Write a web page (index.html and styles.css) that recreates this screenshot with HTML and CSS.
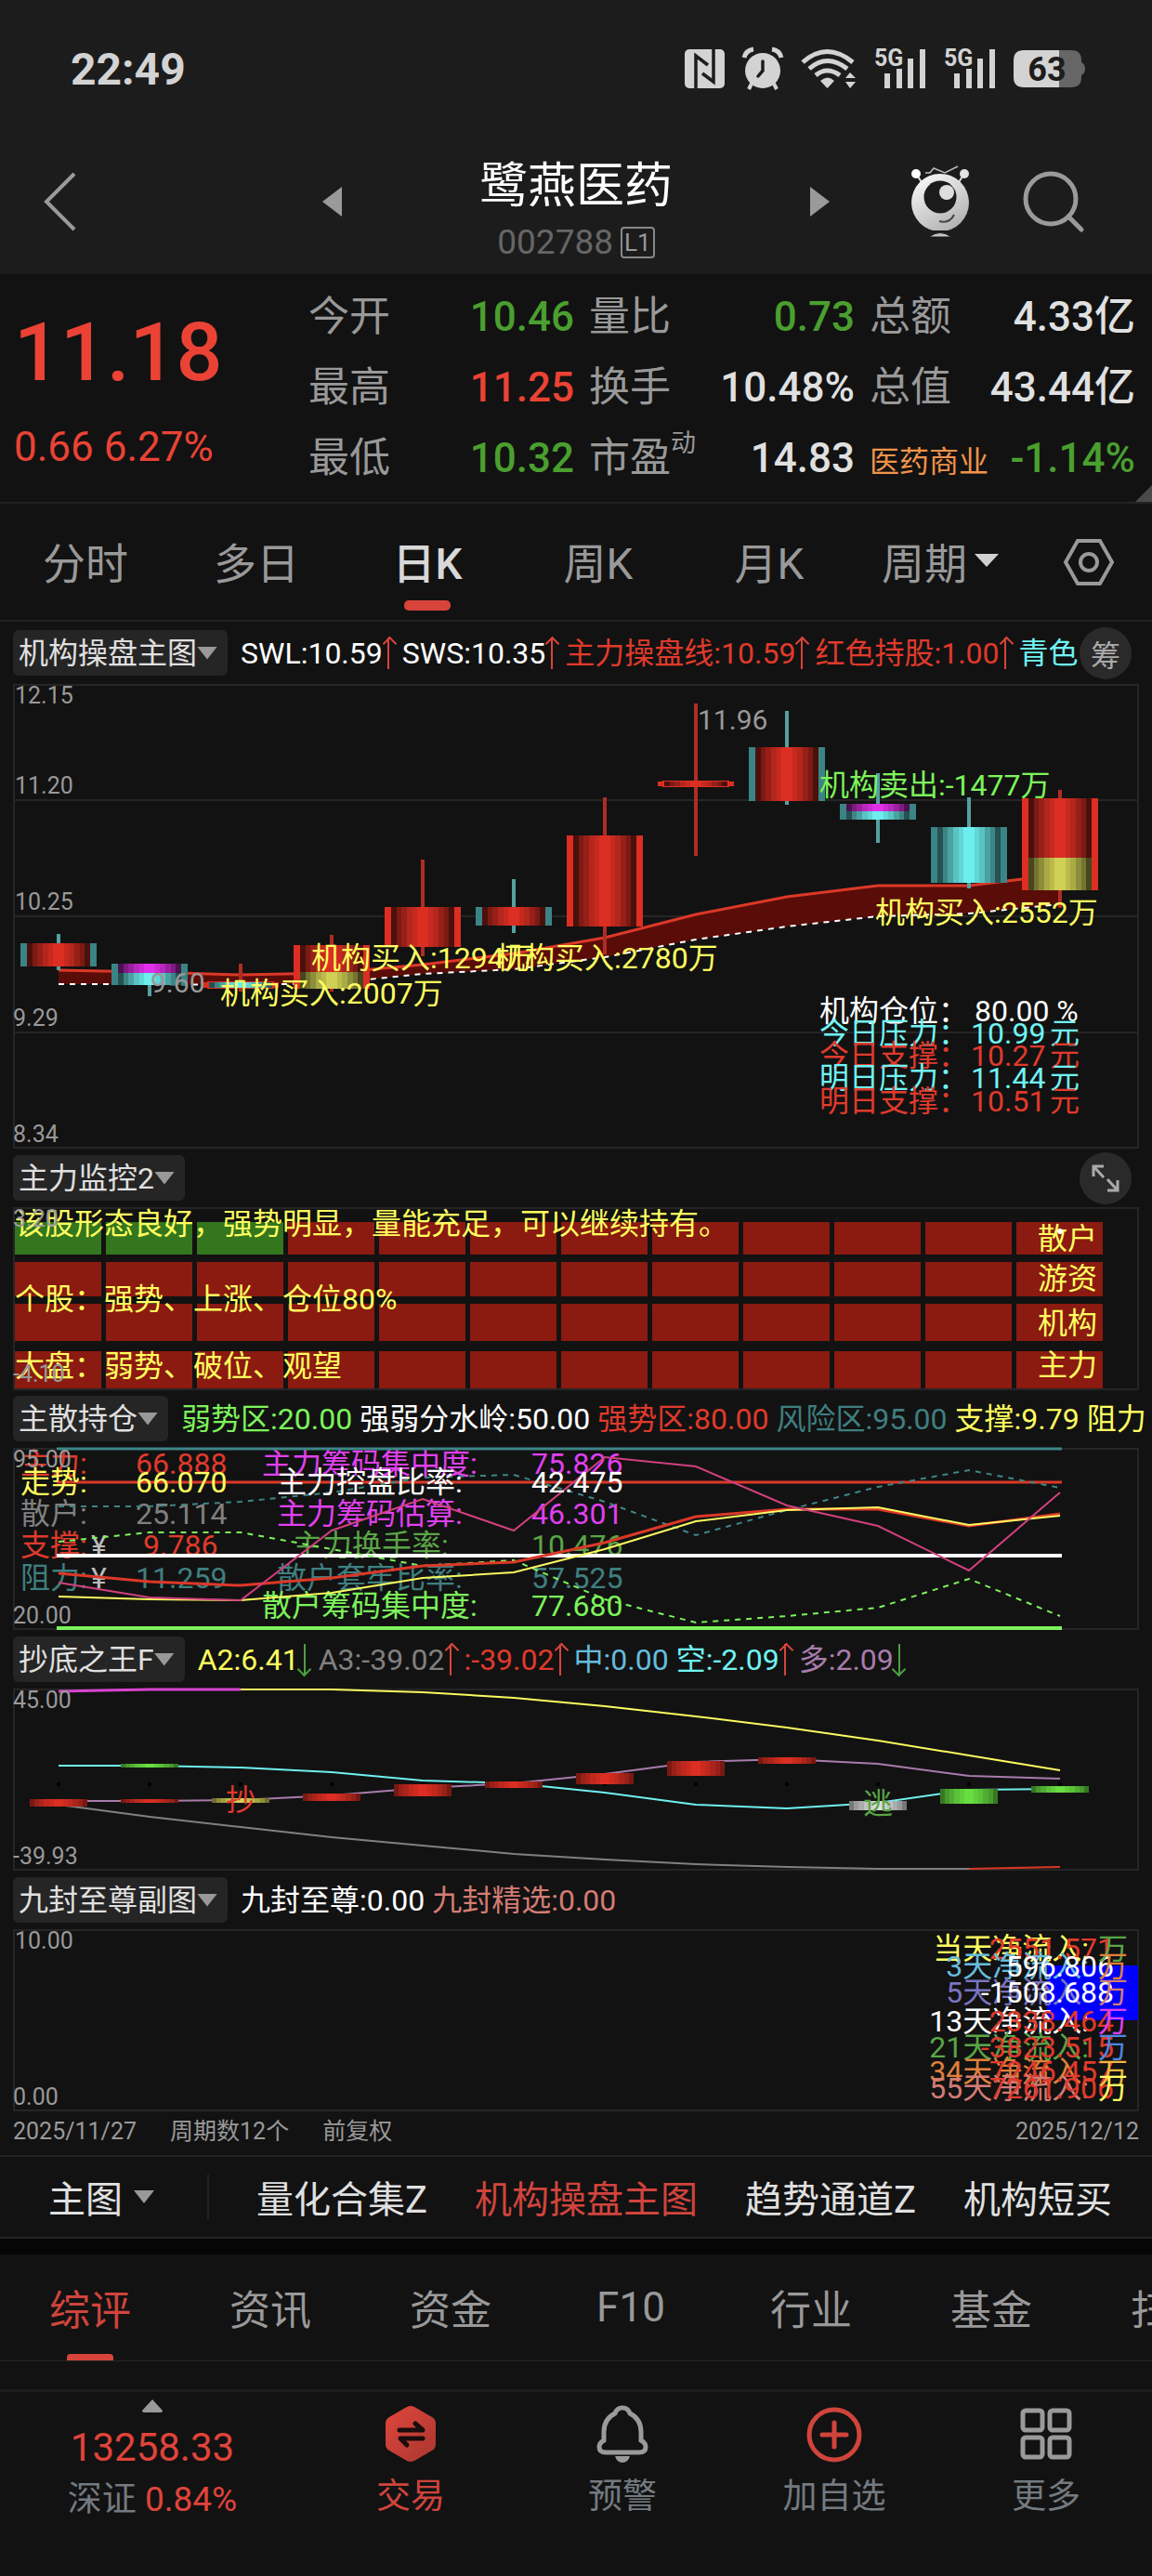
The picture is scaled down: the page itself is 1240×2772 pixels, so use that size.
FILE: index.html
```html
<!DOCTYPE html>
<html lang="zh-CN">
<head>
<meta charset="UTF-8" />
<meta name="viewport" content="width=device-width, initial-scale=1" />
<title>鹭燕医药 002788</title>
<link rel="stylesheet" href="styles.css">
</head>
<body>
<header class="top">
  <div class="status">
    <span class="time">22:49</span>
    <div class="status-icons">
      <svg width="43" height="42" viewBox="0 0 43 42"><rect width="43" height="42" rx="5" fill="#d3d3d3"/><path d="M12 42V7l13 10M31 0v35L19 26" fill="none" stroke="#1c1c1c" stroke-width="3.5"/></svg>
      <svg width="44" height="44" viewBox="0 0 44 44"><circle cx="22" cy="24" r="19" fill="#d3d3d3"/><path d="M2 10Q4 2 12 1M42 10Q40 2 32 1" stroke="#d3d3d3" stroke-width="5" fill="none"/><path d="M10 38l-3 6M34 38l3 6" stroke="#d3d3d3" stroke-width="4"/><path d="M22 14v10l-5 6" fill="none" stroke="#1c1c1c" stroke-width="3.5" stroke-linecap="round"/></svg>
      <svg width="60" height="42" viewBox="0 0 60 42"><g fill="none" stroke="#d3d3d3" stroke-width="5"><path d="M2 14Q28-9 56 14"/><path d="M9 21Q28 4 50 21"/><path d="M16 28Q28 18 42 28"/></g><path d="M21 34q8-7 15 0l-7.5 8zM48 31l5-6 6 6zM48 35l5 7 6-7z" fill="#d3d3d3"/></svg>
      <svg width="56" height="44" viewBox="0 0 56 44"><text x="0" y="19" class="net">5G</text><path d="M11 27h6v16h-6zM24 22h6v21h-6zM36 11h6v32h-6zM49 1h6v42h-6z" fill="#d3d3d3"/></svg>
      <svg width="56" height="44" viewBox="0 0 56 44"><text x="0" y="19" class="net">5G</text><path d="M11 27h6v16h-6zM24 22h6v21h-6zM36 11h6v32h-6zM49 1h6v42h-6z" fill="#d3d3d3"/></svg>
      <svg width="77" height="40" viewBox="0 0 77 40"><path d="M49 0h13q11 0 11 11v2q4 2 4 7t-4 7v2q0 11-11 11H49z" fill="#666"/><path d="M11 0h38v40H11Q0 40 0 29V11Q0 0 11 0z" fill="#d3d3d3"/><text x="36" y="33" class="batt">63</text></svg>
    </div>
  </div>
  <nav class="titlebar">
    <button class="icon-btn back" aria-label="返回"><svg width="34" height="64" viewBox="0 0 34 64"><path d="M32 2L2 32l30 30" fill="none" stroke="#9a9a9a" stroke-width="4"/></svg></button>
    <div class="stock">
      <button class="icon-btn" aria-label="上一只"><svg width="21" height="32" viewBox="0 0 21 32"><path d="M21 0v32L0 16z" fill="#9a9a9a"/></svg></button>
      <div class="stock-name">
        <h1>鹭燕医药</h1>
        <p class="code">002788 <span class="level">L1</span></p>
      </div>
      <button class="icon-btn" aria-label="下一只"><svg width="21" height="32" viewBox="0 0 21 32"><path d="M0 0v32l21-16z" fill="#9a9a9a"/></svg></button>
    </div>
    <div class="actions">
      <button class="icon-btn" aria-label="智能助手">
        <svg width="62" height="78" viewBox="0 0 62 78">
          <defs><linearGradient id="bot" x1="0" y1="0" x2="0.6" y2="1"><stop offset="0" stop-color="#fff"/><stop offset="1" stop-color="#b4b4b4"/></linearGradient></defs>
          <path d="M5 9l8 12M57 9l-8 12" stroke="#e0e0e0" stroke-width="2"/><circle cx="5" cy="9" r="5" fill="#fff"/><circle cx="57" cy="9" r="5" fill="#e4e4e4"/>
          <path d="M15 8h5l4-5 12 5 14-7" fill="none" stroke="#bbb" stroke-width="1.5"/>
          <circle cx="31" cy="40" r="31" fill="url(#bot)"/><circle cx="31" cy="34" r="17.5" fill="#1c1c1c"/><circle cx="38" cy="29" r="8" fill="#dedede"/>
          <path d="M30 60q11 3 16-7" fill="none" stroke="#444" stroke-width="2"/><path d="M15 70h32v1H15z" fill="#1c1c1c"/><path d="M19 77q12-9 24 0z" fill="#c4c4c4" stroke="#1c1c1c"/>
        </svg>
      </button>
      <button class="icon-btn" aria-label="搜索"><svg width="66" height="66" viewBox="0 0 66 66"><circle cx="30" cy="30" r="27" fill="none" stroke="#9a9a9a" stroke-width="5"/><path d="M49 49l14 14" stroke="#9a9a9a" stroke-width="5" stroke-linecap="round"/></svg></button>
    </div>
  </nav>
</header>

<section class="quote">
  <div class="price">
    <strong>11.18</strong>
    <span>0.66 6.27%</span>
  </div>
  <dl class="facts">
    <div><dt>今开</dt><dd class="down">10.46</dd></div>
    <div><dt>量比</dt><dd class="down">0.73</dd></div>
    <div><dt>总额</dt><dd>4.33亿</dd></div>
    <div><dt>最高</dt><dd class="up">11.25</dd></div>
    <div><dt>换手</dt><dd>10.48%</dd></div>
    <div><dt>总值</dt><dd>43.44亿</dd></div>
    <div><dt>最低</dt><dd class="down">10.32</dd></div>
    <div><dt>市盈<sup>动</sup></dt><dd>14.83</dd></div>
    <div><dt class="sector">医药商业</dt><dd class="down">-1.14%</dd></div>
  </dl>
</section>

<nav class="periods">
  <a href="#">分时</a>
  <a href="#">多日</a>
  <a href="#" class="active">日K</a>
  <a href="#">周K</a>
  <a href="#">月K</a>
  <button type="button">周期<svg width="26" height="14" viewBox="0 0 26 14"><path d="M0 0h26L13 14z" fill="#d0d0d0"/></svg></button>
  <button type="button" class="gear" aria-label="设置"><svg width="54" height="50" viewBox="0 0 54 50"><path d="M15 2h24l13 23-13 23H15L2 25z" fill="none" stroke="#999" stroke-width="4"/><circle cx="27" cy="25" r="9" fill="none" stroke="#999" stroke-width="4"/></svg></button>
</nav>

<main class="charts">
  <section class="panel">
    <div class="panel-head first">
      <button type="button" class="pill">机构操盘主图<i class="caret"></i></button>
      <div class="legend">
        <span class="white">SWL:10.59<i class="arrow up"></i></span>
        <span class="white">SWS:10.35<i class="arrow up"></i></span>
        <span class="red">主力操盘线:10.59<i class="arrow up"></i></span>
        <span class="red">红色持股:1.00<i class="arrow up"></i></span>
        <span class="cyan">青色</span>
      </div>
      <button type="button" class="round">筹</button>
    </div>
    <svg class="plot" viewBox="0 0 1212 500">
      <defs>
        <linearGradient id="shade"></linearGradient>
      </defs>
      <path class="frame" d="M1 1h1210v498H1zM1 125h1210M1 250h1210M1 375h1210"/>
      <path fill="#5a0d08" d="M49 308L147 310 245 313 343 311 441 302 539 290 637 273 735 248 833 229 931 217 1029 217 1127 205V237L1029 247 931 250 833 261 735 275 637 294 539 307 441 312 343 322 245 324 147 323 49 323z"/>
      <polyline class="line s-red w3" points="49,308 147,310 245,313 343,311 441,302 539,290 637,273 735,248 833,229 931,217 1029,217 1127,205"/>
      <polyline class="line s-white dash" points="49,323 147,323 245,324 343,322 441,312 539,307 637,294 735,275 833,261 931,250 1029,247 1127,237"/>
      <g id="candles"></g>
      <g class="axis">
        <text x="2" y="21">12.15</text><text x="2" y="118">11.20</text><text x="2" y="243">10.25</text><text x="0" y="368">9.29</text><text x="0" y="493">8.34</text>
      </g>
      <g class="mark gray"><text x="737" y="49">11.96</text><text x="148" y="332">9.60</text></g>
      <g class="yellow">
        <text x="321" y="306">机构买入:1294万</text>
        <text x="519" y="306">机构买入:2780万</text>
        <text x="223" y="344">机构买入:2007万</text>
        <text x="928" y="257">机构买入:2552万</text>
      </g>
      <text class="lime" x="868" y="120">机构卖出:-1477万</text>
      <text class="white" x="868" y="363">机构仓位：<tspan x="1035">80.00 %</tspan></text>
      <text class="cyan" x="868" y="387">今日压力：<tspan x="1031">10.99</tspan><tspan x="1116">元</tspan></text>
      <text class="red" x="868" y="411">今日支撑：<tspan x="1031">10.27</tspan><tspan x="1116">元</tspan></text>
      <text class="cyan" x="868" y="435">明日压力：<tspan x="1031">11.44</tspan><tspan x="1116">元</tspan></text>
      <text class="red" x="868" y="460">明日支撑：<tspan x="1031">10.51</tspan><tspan x="1116">元</tspan></text>
    </svg>
  </section>

  <section class="panel">
    <div class="panel-head">
      <button type="button" class="pill">主力监控2<i class="caret"></i></button>
      <button type="button" class="round" aria-label="全屏"><svg width="30" height="30" viewBox="0 0 30 30" fill="none" stroke="#aaa" stroke-width="3"><path d="M2 13V2h11M2 2l11 12M28 17v11H17M28 28L17 16"/></svg></button>
    </div>
    <svg class="plot" viewBox="0 0 1212 196">
      <rect class="frame" x="1" y="1" width="1210" height="195"/>
      <g id="cells"></g>
      <g class="yellow">
        <text x="2" y="29">该股形态良好，强势明显，量能充足，可以继续持有。</text>
        <text x="2" y="110">个股：强势、上涨、仓位80%</text>
        <text x="2" y="182">大盘：弱势、破位、观望</text>
        <text x="1103" y="45">散户</text><text x="1103" y="88">游资</text><text x="1103" y="136">机构</text><text x="1103" y="181">主力</text>
      </g>
      <circle cx="1127" cy="26" r="3" fill="#fff"/>
      <g class="axis"><text x="0" y="21">3.20</text><text x="0" y="188">-4.10</text></g>
    </svg>
  </section>

  <section class="panel">
    <div class="panel-head">
      <button type="button" class="pill">主散持仓<i class="caret"></i></button>
      <div class="legend">
        <span class="lime">弱势区:20.00</span>
        <span class="white">强弱分水岭:50.00</span>
        <span class="red">强势区:80.00</span>
        <span class="teal">风险区:95.00</span>
        <span class="yellow">支撑:9.79</span>
        <span class="yellow">阻力</span>
      </div>
    </div>
    <svg class="plot" viewBox="0 0 1212 196">
      <rect class="frame" x="1" y="1" width="1210" height="194"/>
      <g class="teal"><text x="8" y="151">阻力:<tspan x="132">11.259</tspan></text><text x="284" y="151">散户套牢比率:<tspan x="558">57.525</tspan></text></g>
      <g class="red"><text x="8" y="28">主力:<tspan x="132">66.888</tspan></text><text x="8" y="116">支撑:<tspan x="140">9.786</tspan></text></g>
      <g class="silver"><text x="84" y="116">¥</text><text x="84" y="151">¥</text></g>
      <text class="dim" x="8" y="82">散户:<tspan x="132">25.114</tspan></text>
      <g class="magenta"><text x="268" y="28">主力筹码集中度:<tspan x="558">75.826</tspan></text><text x="284" y="82">主力筹码估算:<tspan x="558">46.301</tspan></text></g>
      <text class="leaf" x="301" y="116">主力换手率:<tspan x="558">10.476</tspan></text>
      <text class="lime" x="268" y="181">散户筹码集中度:<tspan x="558">77.680</tspan></text>
      <path class="line s-teal w3" d="M47 1H1129"/>
      <path class="line s-red w3" d="M47 37H1129"/>
      <path class="line s-white w4" d="M47 116H1129"/>
      <path class="line s-lime w4" d="M47 194H1129"/>
      <polyline class="line s-teal dash" points="49,63 147,63 245,58 343,48 441,32 539,29 637,58 735,94 833,67 931,42 1029,24 1127,43"/>
      <polyline class="line s-lime dash" points="49,101 147,91 245,91 343,109 441,127 539,121 637,163 735,188 833,181 931,172 1029,141 1127,181"/>
      <polyline class="line s-red w3" points="49,135 147,144 245,148 343,140 441,127 539,123 637,102 735,74 833,66 931,66 1029,84 1127,71"/>
      <polyline class="line s-yellow" points="49,160 147,163 245,164 343,156 441,140 539,134 637,109 735,79 833,67 931,64 1029,83 1127,73"/>
      <polyline class="line s-pink" points="49,145 147,161 245,164 343,89 441,55 539,89 637,10 735,20 833,62 931,84 1029,132 1127,48"/>
      <text class="yellow" x="8" y="48">走势:<tspan x="132">66.070</tspan></text>
      <text class="white" x="284" y="48">主力控盘比率:<tspan x="558">42.475</tspan></text>
      <g class="axis"><text x="0" y="21">95.00</text><text x="0" y="189">20.00</text></g>
    </svg>
  </section>

  <section class="panel">
    <div class="panel-head">
      <button type="button" class="pill">抄底之王F<i class="caret"></i></button>
      <div class="legend">
        <span class="yellow">A2:6.41<i class="arrow down"></i></span>
        <span class="dim">A3:-39.02<i class="arrow up"></i></span>
        <span class="red">:-39.02<i class="arrow up"></i></span>
        <span class="sky">中:0.00</span>
        <span class="cyan">空:-2.09<i class="arrow up"></i></span>
        <span class="mauve">多:2.09<i class="arrow down"></i></span>
      </div>
    </div>
    <svg class="plot" viewBox="0 0 1212 196">
      <rect class="frame" x="1" y="1" width="1210" height="194"/>
      <polyline class="line s-magenta w3" points="49,3 147,1 245,1"/>
      <polyline class="line s-yellow" points="245,1 343,1 441,4 539,10 637,19 735,30 833,42 931,56 1029,72 1127,88"/>
      <polyline class="line s-cyan" points="49,83 147,83 245,85 343,90 441,99 539,102 637,112 735,125 833,129 931,123 1029,109 1127,108"/>
      <polyline class="line s-mauve" points="49,121 147,121 245,120 343,115 441,107 539,102 637,92 735,79 833,76 931,81 1029,94 1127,97"/>
      <polyline class="line s-gray" points="49,125 147,138 245,149 343,160 441,169 539,178 637,184 735,189 833,192 931,194 1029,194"/>
      <polyline class="line s-red" points="1029,194 1127,192"/>
      <g id="bars"></g>
      <text class="red" x="229" y="131">抄</text>
      <text class="leaf" x="915" y="135">逃</text>
      <g class="axis"><text x="0" y="21">45.00</text><text x="0" y="189">-39.93</text></g>
    </svg>
  </section>

  <section class="panel">
    <div class="panel-head">
      <button type="button" class="pill">九封至尊副图<i class="caret"></i></button>
      <div class="legend">
        <span class="white">九封至尊:0.00</span>
        <span class="salmon">九封精选:0.00</span>
      </div>
    </div>
    <svg class="plot" viewBox="0 0 1212 196">
      <rect class="frame" x="1" y="1" width="1210" height="194"/>
      <rect x="1113" y="39" width="98" height="59" fill="#00f"/>
      <g class="end">
        <text class="yellow" x="1158" y="32">当天净流入:</text><text class="red" x="1185" y="32">2551.571</text>
        <text class="sky" x="1158" y="51">3天净流入:</text><text class="white" x="1185" y="51">596.806</text>
        <text class="violet" x="1158" y="79">5天净流入:</text><text class="white" x="1185" y="79">-1508.688</text>
        <text class="white" x="1158" y="110">13天净流入:</text><text class="red" x="1185" y="110">2338.464</text>
        <text class="leaf" x="1158" y="138">21天净流入:</text><text class="red" x="1185" y="138">-3823.515</text>
        <text class="orange" x="1158" y="164">34天净流入:</text><text class="red" x="1185" y="164">7246.457</text>
        <text class="salmon" x="1158" y="182">55天净流入:</text><text class="red" x="1185" y="182">7261.906</text>
      </g>
      <text class="leaf" x="1168" y="32">万</text>
      <text class="orange" x="1168" y="51">万</text>
      <text class="salmon" x="1168" y="79">万</text>
      <text class="magenta" x="1168" y="110">万</text>
      <text class="blue" x="1168" y="138">万</text>
      <text class="gold" x="1168" y="166">万</text>
      <text class="yellow" x="1168" y="182">万</text>
      <g class="axis"><text x="2" y="21">10.00</text><text x="0" y="189">0.00</text></g>
    </svg>
  </section>

  <div class="dates">
    <span>2025/11/27</span><span>周期数12个</span><span>前复权</span><span class="last">2025/12/12</span>
  </div>
</main>

<nav class="indicators">
  <button type="button" class="main-pick">主图<i class="caret"></i></button>
  <a href="#">量化合集Z</a>
  <a href="#" class="active">机构操盘主图</a>
  <a href="#">趋势通道Z</a>
  <a href="#">机构短买</a>
</nav>

<nav class="tabs">
  <a href="#" class="active">综评</a>
  <a href="#">资讯</a>
  <a href="#">资金</a>
  <a href="#">F10</a>
  <a href="#">行业</a>
  <a href="#">基金</a>
  <a href="#">扫雷</a>
</nav>

<footer class="bottom">
  <a href="#" class="index">
    <svg width="22" height="14" viewBox="0 0 22 14"><path d="M11 0l11 12q0 2-2 2H2q-2 0-2-2z" fill="#999"/></svg>
    <strong>13258.33</strong>
    <span>深证 <em>0.84%</em></span>
  </a>
  <a href="#" class="active">
    <svg width="62" height="62" viewBox="0 0 62 62">
      <defs><linearGradient id="hex" x1="0" y1="0" x2="1" y2="1"><stop offset="0" stop-color="#e0473b"/><stop offset="1" stop-color="#a93630"/></linearGradient></defs>
      <path d="M27 2q4-2 8 0l19 11q4 2 4 7v22q0 5-4 7L35 60q-4 2-8 0L8 49q-4-2-4-7V20q0-5 4-7z" fill="url(#hex)"/>
      <path d="M19 27h25l-8-7M44 36H20l7 7" fill="none" stroke="#1b0d0c" stroke-width="5" stroke-linecap="round" stroke-linejoin="round"/>
    </svg>
    <span>交易</span>
  </a>
  <a href="#">
    <svg width="62" height="62" viewBox="0 0 62 62"><path d="M31 3q-6 0-8 6-12 6-12 20v9q-5 3-5 7 0 6 7 6h36q7 0 7-6 0-4-5-7v-9q0-14-12-20-2-6-8-6z" fill="none" stroke="#9a9a9a" stroke-width="5"/><path d="M23 55h16q-2 7-8 7t-8-7z" fill="#9a9a9a"/></svg>
    <span>预警</span>
  </a>
  <a href="#">
    <svg width="62" height="62" viewBox="0 0 62 62" fill="none" stroke="#d0443c" stroke-width="5" stroke-linecap="round"><circle cx="31" cy="32" r="27"/><path d="M31 19v26M18 32h26"/></svg>
    <span>加自选</span>
  </a>
  <a href="#">
    <svg width="62" height="62" viewBox="0 0 62 62" fill="none" stroke="#9a9a9a" stroke-width="5"><rect x="6" y="6" width="21" height="21" rx="3"/><rect x="35" y="6" width="21" height="21" rx="3"/><rect x="6" y="35" width="21" height="21" rx="3"/><rect x="35" y="35" width="21" height="21" rx="3"/></svg>
    <span>更多</span>
  </a>
</footer>
<script src="charts.js"></script>
</body>
</html>
```
FILE: styles.css
```css
* {
  box-sizing: border-box;
}
body {
  margin: 0;
  min-height: 100vh;
  background-color: #121212;
  color: #e0e0e0;
  font-family: Roboto, "Noto Sans CJK SC", sans-serif;
  font-size: 32px;
  overflow-x: hidden;
}
a {
  color: inherit;
  text-decoration: none;
}
button {
  border: none;
  padding: 0;
  background: none;
  color: inherit;
  font: inherit;
  cursor: pointer;
}
svg {
  display: block;
  flex: none;
  overflow: visible;
}

/* header */
.top {
  background-color: #1c1c1c;
  height: 295px;
}
.status {
  display: flex;
  justify-content: space-between;
  align-items: center;
  height: 148px;
  padding: 0 72px 0 76px;
}
.time {
  font-size: 48px;
  font-weight: 700;
  color: #d3d3d3;
}
.status-icons {
  display: flex;
  align-items: center;
  gap: 19px;
}
.net {
  font-size: 25px;
  font-weight: 700;
  fill: #d3d3d3;
}
.batt {
  font-size: 36px;
  font-weight: 700;
  fill: #1c1c1c;
  text-anchor: middle;
}
.titlebar {
  display: grid;
  grid-template-columns: 1fr 546px 1fr;
  align-items: center;
  height: 138px;
  padding: 0 73px;
}
.icon-btn {
  display: block;
}
.back {
  margin-left: -25px;
}
.stock {
  display: flex;
  justify-content: space-between;
  align-items: center;
}
.stock-name {
  margin-top: 20px;
  text-align: center;
}
h1 {
  margin: 0;
  font-size: 52px;
  line-height: 64px;
  font-weight: 400;
  color: #fff;
}
.code {
  display: flex;
  justify-content: center;
  gap: 8px;
  margin: 4px 0 0;
  font-size: 37px;
  line-height: 48px;
  color: #666;
}
.level {
  align-self: center;
  border: 2px solid #888;
  border-radius: 4px;
  padding: 0 2px;
  font-size: 26px;
  line-height: 30px;
  color: #999;
}
.actions {
  display: flex;
  justify-content: flex-end;
  align-items: center;
  gap: 58px;
}

/* quote */
.quote {
  position: relative;
  display: grid;
  grid-template-columns: 332px 1fr;
  height: 247px;
  padding-right: 18px;
  border-bottom: 2px solid #232323;
}
.quote::after {
  content: "";
  position: absolute;
  right: 0;
  bottom: 0;
  border-left: 18px solid transparent;
  border-bottom: 18px solid #4a4a4a;
}
.price {
  display: flex;
  flex-direction: column;
  padding: 34px 0 0 15px;
  color: #ea4335;
}
.price strong {
  font-size: 88px;
  line-height: 100px;
  font-weight: 500;
}
.price span {
  margin-top: 28px;
  font-size: 44px;
  line-height: 48px;
}
.facts {
  display: grid;
  grid-template-columns: 286px 286px 1fr;
  grid-auto-rows: 76px;
  column-gap: 16px;
  margin: 0;
  padding-top: 8px;
  font-size: 44px;
  line-height: 76px;
}
.facts div {
  display: flex;
  justify-content: space-between;
  align-items: baseline;
  white-space: nowrap;
}
dt {
  color: #999;
}
dt sup {
  font-size: 27px;
  line-height: 0;
  vertical-align: 22px;
}
dt.sector {
  font-size: 32px;
  color: #f0944a;
}
dd {
  margin: 0;
  font-weight: 500;
}
dd.up {
  color: #ea4335;
}
dd.down {
  color: #4a9f2f;
}

/* period tabs */
.periods {
  display: grid;
  grid-template-columns: repeat(6, 1fr) 136px;
  height: 127px;
  border-bottom: 2px solid #232323;
  font-size: 46px;
  color: #999;
}
.periods a,
.periods button {
  position: relative;
  display: flex;
  justify-content: center;
  align-items: center;
  gap: 8px;
  padding-bottom: 4px;
}
.periods .gear {
  padding-bottom: 0;
}
.periods .active {
  color: #d8d8d8;
  font-weight: 500;
}
.periods .active::after {
  content: "";
  position: absolute;
  bottom: 10px;
  width: 50px;
  height: 11px;
  border-radius: 5px;
  background-color: #d8443a;
}

/* chart panels */
.charts {
  padding: 0 14px;
}
.panel-head {
  position: relative;
  display: flex;
  align-items: center;
  height: 63px;
}
.panel-head.first {
  height: 67px;
}
.pill {
  display: flex;
  flex: none;
  align-items: center;
  height: 49px;
  padding: 0 11px 0 6px;
  border-radius: 6px;
  background-color: #252525;
  line-height: 48px;
}
.caret {
  width: 22px;
  height: 14px;
  background-color: #999;
  clip-path: polygon(0 0, 100% 0, 50% 100%);
}
.legend {
  display: flex;
  align-items: baseline;
  gap: 8px;
  margin: 0 -14px 0 14px;
  line-height: 48px;
  overflow: hidden;
  white-space: nowrap;
}
.arrow {
  position: relative;
  display: inline-block;
  width: 13px;
  height: 34px;
  vertical-align: -6px;
  color: #d8443a;
  background: linear-gradient(currentColor, currentColor) center / 2px 100% no-repeat;
}
.arrow::before {
  content: "";
  position: absolute;
  left: 2px;
  top: 1px;
  width: 9px;
  height: 9px;
  border: solid currentColor;
  border-width: 2px 0 0 2px;
  transform: rotate(45deg);
}
.arrow.down {
  color: #4aa040;
  transform: rotate(180deg);
}
.round {
  position: absolute;
  right: 8px;
  display: flex;
  justify-content: center;
  align-items: center;
  width: 56px;
  height: 56px;
  border-radius: 50%;
  background-color: #2a2a2a;
  color: #aaa;
}
.plot {
  width: 100%;
  height: auto;
}
.frame {
  fill: none;
  stroke: #252525;
  stroke-width: 2;
}
.line {
  fill: none;
  stroke-width: 2;
}
.w3 { stroke-width: 3; }
.w4 { stroke-width: 4; }
.dash { stroke-dasharray: 6 6; }
.axis {
  fill: #999;
  font-size: 25px;
}
.mark {
  font-size: 30px;
}
.end {
  text-anchor: end;
}

.white { color: #fff; fill: #fff; }
.red { color: #e03a2c; fill: #e03a2c; }
.cyan { color: #70f4f4; fill: #70f4f4; }
.lime { color: #7df35c; fill: #7df35c; }
.teal { color: #3f7f80; fill: #3f7f80; }
.yellow { color: #ffff60; fill: #ffff60; }
.magenta { color: #e040f0; fill: #e040f0; }
.sky { color: #66bcdc; fill: #66bcdc; }
.mauve { color: #a87cac; fill: #a87cac; }
.salmon { color: #d47c74; fill: #d47c74; }
.orange { color: #e0803a; fill: #e0803a; }
.violet { color: #7a74c0; fill: #7a74c0; }
.blue { fill: #4f86e0; }
.gold { fill: #f0b840; }
.leaf { fill: #5aa546; }
.silver { fill: #bbb; }
.gray { fill: #999; }
.dim { color: #808080; fill: #808080; }

.s-red { stroke: #dc3828; }
.s-white { stroke: #fff; }
.s-teal { stroke: #3f8586; }
.s-lime { stroke: #7df35c; }
.s-yellow { stroke: #fafa60; }
.s-pink { stroke: #d0407e; }
.s-magenta { stroke: #d844d0; }
.s-cyan { stroke: #70f0f0; }
.s-mauve { stroke: #a87cac; }
.s-gray { stroke: #808080; }

.dates {
  display: flex;
  gap: 36px;
  align-items: baseline;
  height: 47px;
  font-size: 25px;
  line-height: 44px;
  color: #999;
}
.dates .last {
  margin-left: auto;
}

/* indicator strip */
.indicators {
  display: flex;
  align-items: center;
  gap: 51px;
  height: 90px;
  border: solid #232323;
  border-width: 2px 0;
  font-size: 40px;
  white-space: nowrap;
  overflow: hidden;
}
.main-pick {
  display: flex;
  flex: none;
  align-items: center;
  gap: 12px;
  width: 225px;
  height: 48px;
  padding-left: 52px;
  border-right: 2px solid #222;
}
.indicators .active {
  color: #d0443c;
}

/* info tabs */
.tabs {
  display: flex;
  height: 132px;
  border-top: 17px solid #060606;
  border-bottom: 1px solid #262626;
  font-size: 44px;
  color: #999;
  overflow: hidden;
}
.tabs a {
  position: relative;
  flex: 0 0 194px;
  display: flex;
  justify-content: center;
  align-items: center;
}
.tabs .active {
  color: #d0443c;
}
.tabs .active::after {
  content: "";
  position: absolute;
  bottom: 0;
  width: 50px;
  height: 7px;
  border-radius: 4px 4px 0 0;
  background-color: #d8443a;
}

/* bottom bar */
.bottom {
  display: grid;
  grid-template-columns: 328px repeat(4, 1fr);
  margin-top: 30px;
  padding-bottom: 52px;
  border-top: 3px solid #1e1e1e;
  font-size: 37px;
  color: #737a80;
}
.bottom a {
  display: flex;
  flex-direction: column;
  align-items: center;
  padding-top: 14px;
}
.bottom a span {
  margin-top: 13px;
  line-height: 48px;
}
.bottom .active {
  color: #d0443c;
}
.bottom .index {
  padding-top: 8px;
}
.index strong {
  margin-top: 14px;
  font-size: 42px;
  line-height: 48px;
  font-weight: 400;
  color: #e0443a;
}
.bottom .index span {
  margin-top: 8px;
}
.index em {
  font-style: normal;
  color: #e0443a;
}
```
FILE: charts.js
```js
const NS = 'http://www.w3.org/2000/svg';
const STEP = 98;
const FIRST = 49;

const COLORS = {
  red: '#dc2e22',
  teal: '#3b8485',
  cyan: '#6ceeee',
  magenta: '#e030e8',
  olive: '#d0d055',
  green: '#66de40',
  gray: '#dddddd'
};

function rect(parent, x, y, width, height, fill, opacity) {
  const el = document.createElementNS(NS, 'rect');
  el.setAttribute('x', x);
  el.setAttribute('y', y);
  el.setAttribute('width', width);
  el.setAttribute('height', height);
  el.setAttribute('fill', fill);
  if (opacity) el.setAttribute('opacity', opacity);
  parent.appendChild(el);
}

// stepped shading, dark on both sides and clear in the middle
const shade = document.getElementById('shade');
const steps = [0.66, 0.44, 0.32, 0.18, 0.1, 0, 0, 0.1, 0.18, 0.32, 0.44, 0.66];
steps.forEach((alpha, i) => {
  [i, i + 1].forEach((edge) => {
    const stop = document.createElementNS(NS, 'stop');
    stop.setAttribute('offset', edge / steps.length);
    stop.setAttribute('stop-color', '#000');
    stop.setAttribute('stop-opacity', alpha);
    shade.appendChild(stop);
  });
});

// edge colour, high, low, then [top, bottom, fill] for each part of the body
const candles = [
  ['teal', 269, 308, [[279, 304, 'red']]],
  ['teal', 301, 336, [[301, 311, 'magenta'], [311, 324, 'cyan']]],
  ['red', 301, 331, [[321, 327, 'cyan']]],
  ['red', 270, 331, [[281, 310, 'red'], [310, 328, 'olive']]],
  ['red', 189, 293, [[240, 283, 'red']]],
  ['teal', 210, 268, [[240, 260, 'red']]],
  ['red', 122, 291, [[163, 261, 'red']]],
  ['red', 21, 185, [[105, 110, 'red']]],
  ['teal', 29, 130, [[68, 126, 'red']]],
  ['teal', 96, 171, [[129, 137, 'magenta'], [137, 146, 'cyan']]],
  ['teal', 122, 220, [[154, 214, 'cyan']]],
  ['red', 114, 241, [[123, 187, 'red'], [187, 222, 'olive']]]
];

const candleGroup = document.getElementById('candles');
candles.forEach(([edge, high, low, parts], i) => {
  const x = FIRST + i * STEP;
  const top = parts[0][0];
  const bottom = parts[parts.length - 1][1];
  rect(candleGroup, x - 2, high, 4, low - high, edge === 'red' ? '#b02c22' : '#55a0a0');
  rect(candleGroup, x - 41, top, 82, bottom - top, COLORS[edge]);
  parts.forEach(([y1, y2, color]) => {
    rect(candleGroup, x - 34, y1, 68, y2 - y1, COLORS[color]);
    rect(candleGroup, x - 34, y1, 68, y2 - y1, 'url(#shade)');
  });
  if (bottom - top < 8) {
    rect(candleGroup, x - 36, bottom, 72, 1, COLORS[edge]);
    rect(candleGroup, x - 36, top - 1, 72, 1, COLORS[edge]);
  }
});

const cellGroup = document.getElementById('cells');
[[16, 35], [59, 37], [104, 40], [155, 40]].forEach(([y, height], row) => {
  for (let i = 0; i < 12; i++) {
    rect(cellGroup, 2 + i * STEP, y, 93, height, row === 0 && i < 3 ? '#33761d' : '#8b1a10');
  }
});

const bars = [
  [0, 119, 127, 'red'], [1, 81, 85, 'green'], [1, 119, 123, 'red'], [2, 118, 123, 'olive'],
  [3, 113, 121, 'red'], [4, 103, 116, 'red'], [5, 100, 107, 'red'], [6, 91, 103, 'red'],
  [7, 78, 94, 'red'], [8, 74, 81, 'red'], [9, 121, 131, 'gray'], [10, 108, 124, 'green'],
  [11, 105, 112, 'green']
];

const barGroup = document.getElementById('bars');
for (let i = 0; i < 12; i++) {
  rect(barGroup, FIRST + i * STEP - 2, 101, 4, 4, '#000');
}
bars.forEach(([i, y1, y2, color]) => {
  const x = FIRST + i * STEP - 31;
  rect(barGroup, x, y1, 62, y2 - y1, COLORS[color]);
  rect(barGroup, x, y1, 62, y2 - y1, 'url(#shade)', 0.7);
});
```
